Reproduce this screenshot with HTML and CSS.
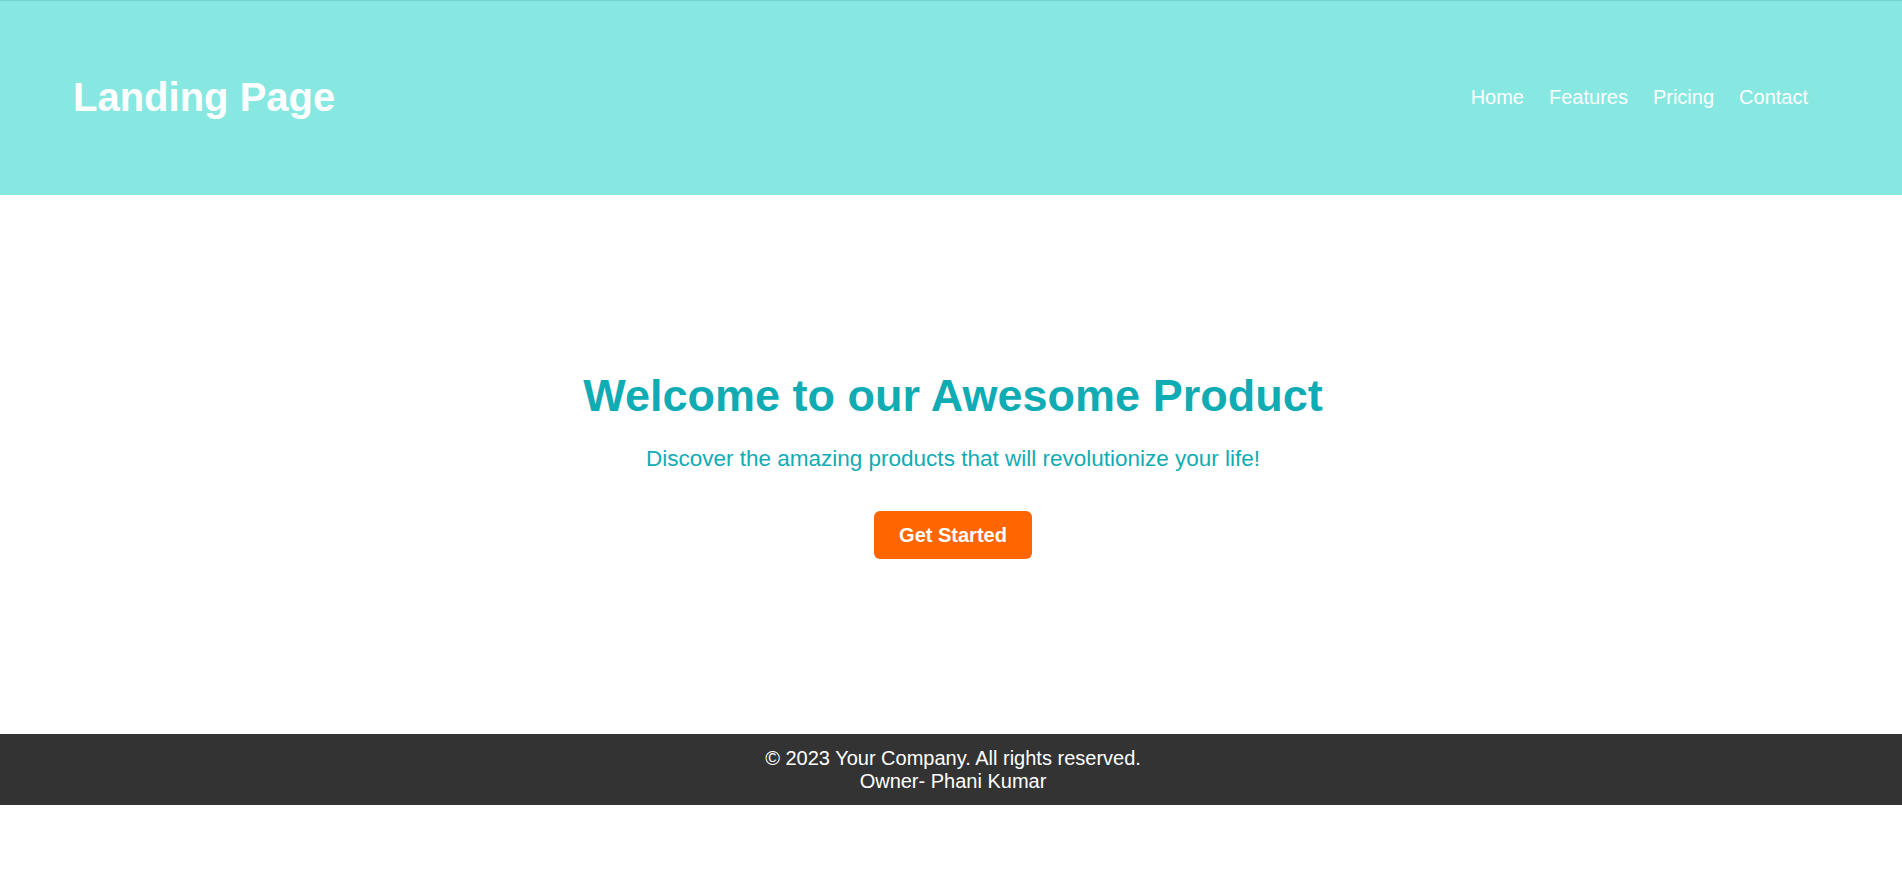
FILE: index.html
```html
<!DOCTYPE html>
<html lang="en">
<head>
<meta charset="utf-8">
<title>Landing Page</title>
<link rel="stylesheet" href="styles.css">
</head>
<body>
<header class="site-header">
  <div class="logo">Landing Page</div>
  <nav class="nav">
    <a href="#">Home</a>
    <a href="#">Features</a>
    <a href="#">Pricing</a>
    <a href="#">Contact</a>
  </nav>
</header>
<section class="hero">
  <h2 class="hero-title">Welcome to our Awesome Product</h2>
  <p class="hero-sub">Discover the amazing products that will revolutionize your life!</p>
  <a class="btn" href="#">Get Started</a>
</section>
<footer class="site-footer">
  <div>&copy; 2023 Your Company. All rights reserved.</div>
  <div>Owner- Phani Kumar</div>
</footer>
</body>
</html>
```
FILE: styles.css
```css
* { box-sizing: border-box; }
html, body { margin: 0; padding: 0; }
body {
  font-family: "Liberation Sans", Arial, sans-serif;
  background: #ffffff;
}
.site-header {
  height: 195px;
  background: #87e8e1;
  border-top: 1px solid #74d3cc;
  display: flex;
  align-items: center;
  justify-content: space-between;
  padding: 0 94px 2px 73px;
}
.logo {
  color: #ffffff;
  font-weight: bold;
  font-size: 40px;
  line-height: 46px;
}
.nav {
  display: flex;
  gap: 25px;
}
.nav a {
  color: #ffffff;
  text-decoration: none;
  font-size: 20px;
  line-height: 23px;
}
.hero {
  height: 539px;
  padding-left: 4px;
  display: flex;
  flex-direction: column;
  align-items: center;
  justify-content: center;
  text-align: center;
}
.hero-title {
  margin: 0 0 24px;
  color: #10acb4;
  font-size: 45px;
  line-height: 52px;
  font-weight: bold;
}
.hero-sub {
  margin: 0 0 39px;
  color: #10acb4;
  font-size: 22.5px;
  line-height: 26px;
}
.btn {
  display: inline-block;
  background: #ff6600;
  color: #ffffff;
  text-decoration: none;
  font-weight: bold;
  font-size: 20px;
  line-height: 23px;
  padding: 12.5px 25px;
  border-radius: 6px;
}
.site-footer {
  background: #333333;
  color: #ffffff;
  text-align: center;
  font-size: 20px;
  line-height: 23px;
  padding: 12.5px 0 12.5px 4px;
}
```
